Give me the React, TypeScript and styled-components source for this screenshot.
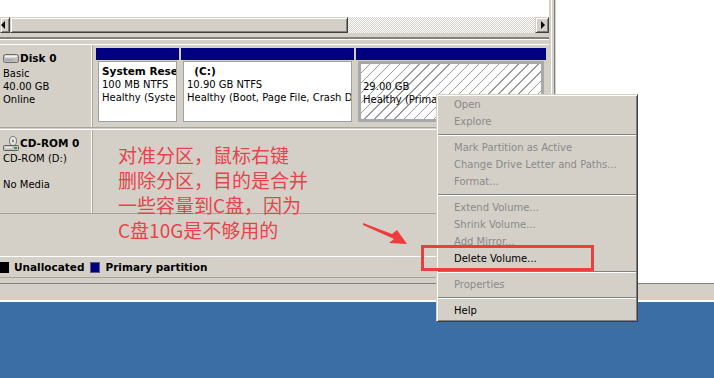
'use client';

// react
import {
    memo,
} from 'react';
// styled-components
import styled, { createGlobalStyle } from 'styled-components';

const FACE = '#d4d0c8';
const SHADOW = '#808080';
const NAVY = '#000080';

const GlobalStyle = createGlobalStyle`
    html, body {
        margin: 0;
        padding: 0;
        background: #3a6ea5;
    }
    body {
        font-family: "DejaVu Sans", Tahoma, sans-serif;
        font-size: 10px;
        color: #000;
    }
`;

const StyledScreen = styled.div`
    position: relative;
    width: 714px;
    height: 378px;
    overflow: hidden;
    display: flex;
    flex-direction: column;
    background: #3a6ea5;
`;

const StyledWindow = styled.div`
    display: flex;
    height: 283px;
    background: #fff;
`;

const StyledDiskPane = styled.div`
    width: 549px;
    display: flex;
    flex-direction: column;
    background: ${FACE};
`;

const StyledListArea = styled.div`
    height: 17px;
    background: #fff;
`;

const StyledHScroll = styled.div`
    height: 16px;
    display: flex;
    background: repeating-conic-gradient(#fff 0 25%, ${FACE} 0 50%) 0 0 / 2px 2px;
`;

const StyledScrollPart = styled.div<{ $w?: number; $align?: string }>`
    box-sizing: border-box;
    width: ${(p) => (p.$w ? `${p.$w}px` : 'auto')};
    height: 16px;
    display: flex;
    align-items: center;
    justify-content: ${(p) => p.$align ?? 'center'};
    background: ${FACE};
    border: 1px solid;
    border-color: ${FACE} #404040 #404040 ${FACE};
    box-shadow: inset 1px 1px #fff, inset -1px -1px ${SHADOW};
`;

const StyledScrollTrack = styled.div`
    flex: 1;
`;

const StyledTriangle = styled.span<{ $dir: 'left' | 'right' }>`
    width: 0;
    height: 0;
    border-top: 4px solid transparent;
    border-bottom: 4px solid transparent;
    ${(p) => (p.$dir === 'left'
        ? 'border-right: 4px solid #000; margin-left: 0px;'
        : 'border-left: 4px solid #000; margin-left: 1px;')}
`;

const StyledSplitter = styled.div`
    height: 11px;
    background: linear-gradient(
        ${FACE} 0 4px,
        ${SHADOW} 4px 6px,
        #fff 6px 7px,
        ${FACE} 7px
    );
`;

const StyledDiskRow = styled.div<{ $h: number }>`
    height: ${(p) => p.$h}px;
    display: flex;
    border-top: 1px solid #fff;
    border-bottom: 1px solid #a8a49c;
`;

const StyledRowGap = styled.div`
    height: 1px;
`;

const StyledDiskLabel = styled.div`
    box-sizing: border-box;
    width: 92px;
    padding: 5px 0 0 3px;
    border-right: 1px solid #fff;
    line-height: 13px;
    white-space: nowrap;
`;

const StyledDiskName = styled.div`
    height: 17px;
    display: flex;
    align-items: center;
    gap: 1px;
    font-weight: bold;
    font-size: 10.5px;
`;

const StyledPartitions = styled.div`
    flex: 1;
    display: flex;
    gap: 2px;
    padding: 3px 0 0 3px;
    border-left: 1px solid #a8a49c;
`;

const StyledPartition = styled.div<{ $w: number }>`
    width: ${(p) => p.$w}px;
    display: flex;
    flex-direction: column;
`;

const StyledPartHead = styled.div`
    height: 12px;
    background: ${NAVY};
`;

const StyledPartBody = styled.div<{ $selected?: boolean }>`
    box-sizing: border-box;
    height: 61px;
    margin: 1px 2px 0;
    padding: 3px 0 0 ${(p) => (p.$selected ? 2 : 3)}px;
    overflow: hidden;
    white-space: pre;
    line-height: 13px;
    border: ${(p) => (p.$selected ? '3px solid #a8a8a8' : '1px solid #a0a0a0')};
    background: ${(p) => (p.$selected
        ? 'repeating-linear-gradient(135deg, #fff 0 6px, #9a9a9a 6px 7px)'
        : '#fff')};
`;

const StyledBoldLine = styled.div`
    font-weight: bold;
    font-size: 10.5px;
    height: 13px;
`;

const StyledEmptyArea = styled.div`
    flex: 1;
`;

const StyledLegend = styled.div`
    height: 20px;
    display: flex;
    align-items: center;
    border-top: 1px solid #fff;
    font-weight: bold;
    font-size: 10.5px;
`;

const StyledSwatch = styled.span<{ $color: string; $w: number }>`
    width: ${(p) => p.$w}px;
    height: 11px;
    box-sizing: border-box;
    background: ${(p) => p.$color};
    border: 1px solid ${(p) => (p.$color === '#000' ? '#000' : '#5a5a8a')};
    margin: 0 5px 0 ${(p) => (p.$color === '#000' ? 0 : 6)}px;
`;

const StyledPaneBottom = styled.div`
    height: 5px;
    border-top: 1px solid #a8a49c;
`;

const StyledVBorder = styled.div`
    width: 7px;
    background: linear-gradient(90deg,
        ${FACE} 0 2px,
        #fff 2px 3px,
        ${FACE} 3px 5px,
        ${SHADOW} 5px 6px,
        ${FACE} 6px
    );
`;

const StyledWhitePane = styled.div`
    flex: 1;
    background: #fff;
`;

const StyledStatusBar = styled.div`
    height: 16px;
    background: ${FACE};
    border-top: 1px solid ${SHADOW};
    border-bottom: 2px solid #fff;
`;

const StyledDesktop = styled.div`
    flex: 1;
`;

// overlays
const StyledNote = styled.div`
    position: absolute;
    left: 118px;
    top: 142px;
    font-family: "Noto Sans CJK SC", sans-serif;
    font-size: 19px;
    line-height: 25px;
    color: #e8434b;
    white-space: pre;
`;

const StyledArrow = styled.svg`
    position: absolute;
    left: 360px;
    top: 220px;
`;

const StyledMenu = styled.div`
    position: absolute;
    left: 436px;
    top: 94px;
    width: 202px;
    box-sizing: border-box;
    padding: 1px 1px 2px;
    background: ${FACE};
    border: 1px solid;
    border-color: ${FACE} #404040 #404040 ${FACE};
    box-shadow: inset 1px 1px #fff, inset -1px -1px ${SHADOW};
`;

const StyledMenuItem = styled.div<{ $disabled?: boolean }>`
    height: 17px;
    line-height: 17px;
    padding-left: 16px;
    font-size: 10px;
    white-space: nowrap;
    color: ${(p) => (p.$disabled ? '#8a8a8a' : '#000')};
`;

const StyledMenuSep = styled.div`
    height: 9px;
    display: flex;
    align-items: center;

    &::after {
        content: '';
        flex: 1;
        height: 1px;
        border-top: 1px solid ${SHADOW};
        border-bottom: 1px solid #fff;
        height: 0;
    }
`;

const StyledHighlightBox = styled.div`
    position: absolute;
    left: 421px;
    top: 245px;
    width: 173px;
    height: 26px;
    box-sizing: border-box;
    border: 3px solid #e8403f;
`;

type TMenuEntry = { label: string; disabled?: boolean } | null;

const MENU: TMenuEntry[] = [
    { label: 'Open', disabled: true },
    { label: 'Explore', disabled: true },
    null,
    { label: 'Mark Partition as Active', disabled: true },
    { label: 'Change Drive Letter and Paths...', disabled: true },
    { label: 'Format...', disabled: true },
    null,
    { label: 'Extend Volume...', disabled: true },
    { label: 'Shrink Volume...', disabled: true },
    { label: 'Add Mirror...', disabled: true },
    { label: 'Delete Volume...' },
    null,
    { label: 'Properties', disabled: true },
    null,
    { label: 'Help' },
];

const PARTITIONS = [
    { w: 83, name: 'System Reserved', size: '100 MB NTFS', status: 'Healthy (System, Active, Primary Partition)' },
    { w: 173, name: '  (C:)', size: '10.90 GB NTFS', status: 'Healthy (Boot, Page File, Crash Dump, Primary Partition)' },
    { w: 190, name: ' ', size: '29.00 GB', status: 'Healthy (Primary Partition)', selected: true },
];

function DiskIcon() {
    return (
        <svg width="16" height="9" viewBox="0 0 16 9">
            <rect x="0.5" y="0.5" width="15" height="8" rx="2" fill="#bdbdbd" stroke="#6a6a6a" />
            <rect x="2" y="1.5" width="12" height="2" fill="#f2f2f2" />
            <rect x="2" y="5.5" width="8" height="1" fill="#9a9a9a" />
        </svg>
    );
}

function CdIcon() {
    return (
        <svg width="16" height="16" viewBox="0 0 16 16">
            <ellipse cx="10" cy="5" rx="3.5" ry="4.5" fill="#e4e4e4" stroke="#7a7a7a" />
            <ellipse cx="10" cy="5" rx="1" ry="1.3" fill="#7a7a7a" />
            <rect x="0.5" y="9.5" width="15" height="5" rx="1" fill="#c4c4c4" stroke="#5e5e5e" />
            <rect x="2" y="11" width="7" height="1" fill="#f4f4f4" />
            <rect x="11" y="11" width="3" height="2" fill="#3a9a3a" />
        </svg>
    );
}

function App() {
    return (
        <StyledScreen>
            <GlobalStyle />
            <StyledWindow>
                <StyledDiskPane>
                    <StyledListArea />
                    <StyledHScroll>
                        <StyledScrollPart $w={10} $align="flex-start">
                            <StyledTriangle $dir="left" />
                        </StyledScrollPart>
                        <StyledScrollPart $w={338} />
                        <StyledScrollTrack />
                        <StyledScrollPart $w={14}>
                            <StyledTriangle $dir="right" />
                        </StyledScrollPart>
                    </StyledHScroll>
                    <StyledSplitter />

                    <StyledDiskRow $h={82}>
                        <StyledDiskLabel>
                            <StyledDiskName><DiskIcon />Disk 0</StyledDiskName>
                            <div>Basic</div>
                            <div>40.00 GB</div>
                            <div>Online</div>
                        </StyledDiskLabel>
                        <StyledPartitions>
                            {PARTITIONS.map((part) => (
                                <StyledPartition key={part.size} $w={part.w}>
                                    <StyledPartHead />
                                    <StyledPartBody $selected={part.selected}>
                                        <StyledBoldLine>{part.name}</StyledBoldLine>
                                        <div>{part.size}</div>
                                        <div>{part.status}</div>
                                    </StyledPartBody>
                                </StyledPartition>
                            ))}
                        </StyledPartitions>
                    </StyledDiskRow>
                    <StyledRowGap />
                    <StyledDiskRow $h={83}>
                        <StyledDiskLabel>
                            <StyledDiskName><CdIcon />CD-ROM 0</StyledDiskName>
                            <div>CD-ROM (D:)</div>
                            <div>&nbsp;</div>
                            <div>No Media</div>
                        </StyledDiskLabel>
                        <StyledPartitions />
                    </StyledDiskRow>

                    <StyledEmptyArea />
                    <StyledLegend>
                        <StyledSwatch $color="#000" $w={9} />
                        Unallocated
                        <StyledSwatch $color={NAVY} $w={10} />
                        Primary partition
                    </StyledLegend>
                    <StyledPaneBottom />
                </StyledDiskPane>
                <StyledVBorder />
                <StyledWhitePane />
            </StyledWindow>
            <StyledStatusBar />
            <StyledDesktop />

            <StyledNote>
                {'对准分区，鼠标右键\n删除分区，目的是合并\n一些容量到C盘，因为\nC盘10G是不够用的'}
            </StyledNote>

            <StyledMenu>
                {MENU.map((entry, i) => (entry
                    ? <StyledMenuItem key={entry.label} $disabled={entry.disabled}>{entry.label}</StyledMenuItem>
                    : <StyledMenuSep key={`sep-${i}`} />))}
            </StyledMenu>

            <StyledArrow width="50" height="28" viewBox="0 0 50 28">
                <polygon points="3,3 32,14 37,10 47,24 29,23 34,19 3,5" fill="#ee3b3b" />
            </StyledArrow>
            <StyledHighlightBox />
        </StyledScreen>
    );
}

export default memo(App);
